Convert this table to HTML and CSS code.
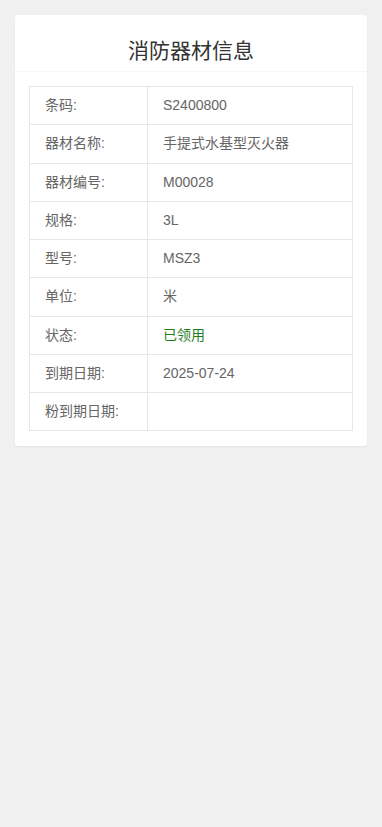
FILE: index.html
```html
<!DOCTYPE html>
<html lang="zh-CN">
<head>
    <meta charset="UTF-8">
    <meta name="viewport" content="width=device-width, initial-scale=1.0">
    <title>消防器材信息</title>
    <link rel="stylesheet" href="styles.css">
</head>
<body>
    <div class="card">
        <div class="card-header">
            <h1>消防器材信息</h1>
        </div>
        <div class="card-body">
            <table class="info-table">
                <tr><td class="label">条码:</td><td>S2400800</td></tr>
                <tr><td class="label">器材名称:</td><td>手提式水基型灭火器</td></tr>
                <tr><td class="label">器材编号:</td><td>M00028</td></tr>
                <tr><td class="label">规格:</td><td>3L</td></tr>
                <tr><td class="label">型号:</td><td>MSZ3</td></tr>
                <tr><td class="label">单位:</td><td>米</td></tr>
                <tr><td class="label">状态:</td><td class="status-used">已领用</td></tr>
                <tr><td class="label">到期日期:</td><td>2025-07-24</td></tr>
                <tr><td class="label">粉到期日期:</td><td></td></tr>
            </table>
        </div>
    </div>
</body>
</html>
```

FILE: styles.css
```css
* {
    margin: 0;
    padding: 0;
    box-sizing: border-box;
}

body {
    font-family: 'Liberation Sans', 'Noto Sans CJK SC', Arial, sans-serif;
    background: #f0f0f0;
    padding: 15px;
}

.card {
    background: #fff;
    border-radius: 3px;
    box-shadow: 0 1px 2px rgba(0,0,0,0.05);
}

.card-header {
    height: 57px;
    display: flex;
    align-items: center;
    justify-content: center;
    border-bottom: 1px solid #f6f6f6;
}

.card-header h1 {
    font-size: 21px;
    font-weight: normal;
    color: #333;
    padding-top: 14px;
    line-height: 1;
}

.card-body {
    padding: 14px 14px 15px;
}

.info-table {
    width: 100%;
    border-collapse: collapse;
    font-size: 14px;
    line-height: 21px;
    color: #666;
}

.info-table td {
    border: 1px solid #e6e6e6;
    padding: 8.125px 15px;
    height: 38.25px;
}

.info-table .label {
    width: 118px;
}

.status-used {
    color: #1e7e1e;
}
```
